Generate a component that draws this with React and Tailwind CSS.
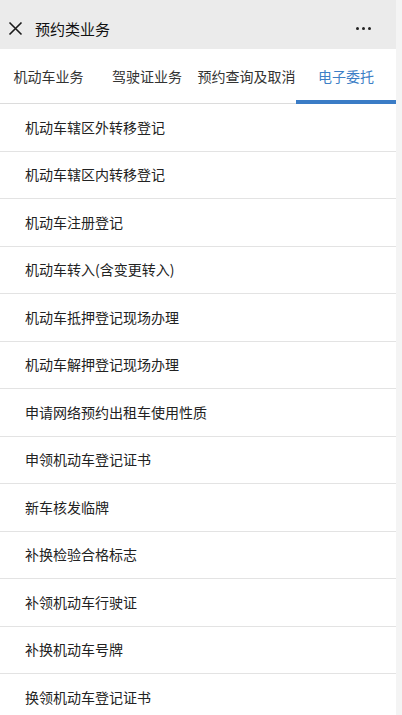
import React from 'react';

const tabs = [
  { label: '机动车业务', w: 'w-[97px]' },
  { label: '驾驶证业务', w: 'w-[100px]' },
  { label: '预约查询及取消', w: 'w-[99px]' },
  { label: '电子委托', w: 'w-[100px]', active: true },
];

const items = [
  '机动车辖区外转移登记',
  '机动车辖区内转移登记',
  '机动车注册登记',
  '机动车转入(含变更转入)',
  '机动车抵押登记现场办理',
  '机动车解押登记现场办理',
  '申请网络预约出租车使用性质',
  '申领机动车登记证书',
  '新车核发临牌',
  '补换检验合格标志',
  '补领机动车行驶证',
  '补换机动车号牌',
  '换领机动车登记证书',
];

const App = () => {
  return (
    <div
      className="flex w-[402px] h-[715px] overflow-hidden bg-white"
      style={{ fontFamily: '"Noto Sans CJK SC", "Noto Sans", sans-serif' }}
    >
      <div className="w-[396px] flex flex-col">
        {/* Top bar */}
        <div className="h-[49px] bg-[#ebebeb] flex items-center px-2 pt-[8px] shrink-0">
          <svg width="15" height="15" viewBox="0 0 15 15">
            <path d="M1.5 1.5 L13.5 13.5 M13.5 1.5 L1.5 13.5" stroke="#1a1a1a" strokeWidth="1.6" fill="none" />
          </svg>
          <span className="ml-[12px] text-[15px] text-[#111] leading-none">预约类业务</span>
          <div className="ml-auto mr-[17px] flex gap-[3px] items-center">
            <span className="w-[3px] h-[3px] rounded-full bg-[#222]" />
            <span className="w-[3px] h-[3px] rounded-full bg-[#222]" />
            <span className="w-[3px] h-[3px] rounded-full bg-[#222]" />
          </div>
        </div>

        {/* Tabs */}
        <div className="h-[55px] flex border-b border-[#dcdcdc] shrink-0">
          {tabs.map((t) => (
            <div
              key={t.label}
              className={`${t.w} flex items-center justify-center text-[14px] relative ${
                t.active ? 'text-[#3d7fc6]' : 'text-[#333]'
              }`}
            >
              {t.label}
              {t.active && (
                <span className="absolute left-0 right-0 -bottom-[1px] h-[4px] bg-[#3a7cc6]" />
              )}
            </div>
          ))}
        </div>

        {/* List */}
        <div className="flex flex-col">
          {items.map((item) => (
            <div
              key={item}
              className="h-[47.5px] shrink-0 flex items-center pl-[25px] border-b border-[#e3e3e3] text-[14px] text-[#222]"
            >
              {item}
            </div>
          ))}
        </div>
      </div>
      <div className="flex-1 bg-[#f4f4f4]" />
    </div>
  );
};

export default App;
